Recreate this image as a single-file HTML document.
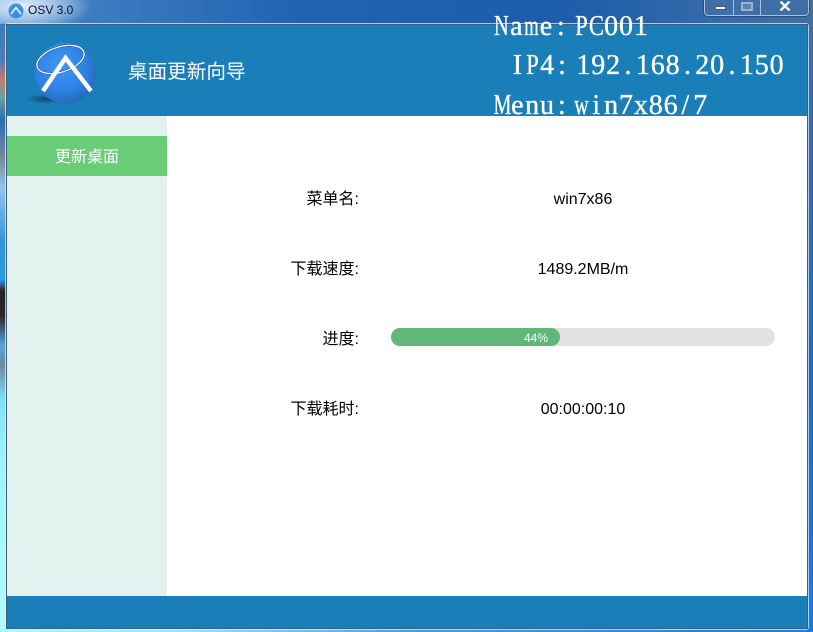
<!DOCTYPE html>
<html><head><meta charset="utf-8"><style>
html,body{margin:0;padding:0}
body{width:813px;height:632px;overflow:hidden;position:relative;font-family:"Liberation Sans","WenQuanYi Zen Hei","Noto Sans CJK SC",sans-serif;background:#1c6cc8}
div{position:absolute;box-sizing:border-box}
.lab{width:200px;left:159px;text-align:right;font-size:16px;line-height:20px;color:#000;white-space:nowrap}
.val{width:384px;left:391px;text-align:center;font-size:16px;line-height:20px;color:#000;white-space:nowrap}
.big{font-family:"Liberation Serif",serif;font-size:28px;line-height:32px;color:#fff;white-space:nowrap;z-index:3;-webkit-text-stroke:.35px #fff}
.big span{display:inline-flex;justify-content:center;width:14.86px}
.big span.n{transform:scaleX(.72)}
.big span.m{transform:scaleX(.66)}
.big span.p{transform:scaleX(.8)}
</style></head><body>
<div style="left:0;top:0;width:813px;height:24px;background:linear-gradient(90deg,#5b8fc9 0,#3f7cc0 90px,#1f63b2 300px,#1c5dac 560px,#3a6da8 760px,#42709f 813px)"></div>
<div style="left:0;top:0;width:90px;height:24px;background:radial-gradient(ellipse 70px 26px at 22px 6px,rgba(235,245,255,.95),rgba(200,225,250,.55) 60%,rgba(180,210,240,0) 100%)"></div>
<div style="left:0;top:24px;width:6px;height:608px;background:linear-gradient(180deg,#3d78bd 0,#4a7fb8 6%,#c47a70 9%,#6aa39a 12%,#2a6cb8 16%,#7a8a9a 22%,#8fc6ee 27%,#2f93dc 36%,#2a9be6 42%,#2a2024 44%,#30262a 48%,#56a5dc 53%,#6a8a9c 56%,#7fe2fb 62%,#9cf4ff 72%,#b2fbff 100%)"></div>
<div style="left:807px;top:24px;width:6px;height:608px;background:linear-gradient(180deg,#40709f 0,#2f6bb0 30%,#1c6cc8 60%,#1e7ae0 100%)"></div>
<div style="left:0;top:628px;width:813px;height:4px;background:linear-gradient(90deg,#aaf9ff 0,#8fe8fb 180px,#3f9cec 420px,#1e7ae0 813px)"></div>
<div style="left:5px;top:23px;width:804px;height:607px;border:1px solid rgba(235,245,255,.7);border-radius:3px"></div>
<div style="left:6px;top:24px;width:802px;height:605px;border:1px solid #3d5f7c;background:#fff"></div>

<div style="left:7px;top:25px;width:800px;height:91px;background:#1a7fb9"></div>
<svg style="position:absolute;left:20px;top:35px" width="90" height="75" viewBox="20 35 90 75">
<defs><radialGradient id="b" cx=".42" cy=".38" r=".68"><stop offset="0" stop-color="#3c98fa"/><stop offset=".6" stop-color="#2f82e4"/><stop offset="1" stop-color="#2266b4"/></radialGradient><radialGradient id="s"><stop offset="0" stop-color="#0c3a5c" stop-opacity=".85"/><stop offset="1" stop-color="#0c3a5c" stop-opacity="0"/></radialGradient></defs>
<ellipse cx="47" cy="99" rx="22" ry="5" fill="url(#s)"/>
<circle cx="65.5" cy="73" r="30.5" fill="url(#b)"/>
<ellipse cx="60.5" cy="59.5" rx="24.5" ry="12.5" transform="rotate(-18 60.5 59.5)" fill="none" stroke="#123a66" stroke-width="2.4" opacity=".55"/>
<ellipse cx="60.5" cy="59.5" rx="24.5" ry="12.5" transform="rotate(-18 60.5 59.5)" fill="none" stroke="#fff" stroke-width="1.2"/>
<path d="M43 91 L65.5 58 L91 91" fill="none" stroke="#fff" stroke-width="4.4"/>
</svg>
<div style="left:128px;top:60px;font-size:19.6px;line-height:24px;color:#fff;white-space:nowrap">桌面更新向导</div>

<div class="big" style="left:494px;top:11px"><span class="n">N</span><span>a</span><span class="m">m</span><span>e</span><span>:</span></div>
<div class="big" style="left:574px;top:11px"><span class="p">P</span><span class="p">C</span><span>0</span><span>0</span><span>1</span></div>
<div class="big" style="left:510px;top:50px"><span>I</span><span class="p">P</span><span>4</span><span>:</span></div>
<div class="big" style="left:576px;top:50px"><span>1</span><span>9</span><span>2</span><span>.</span><span>1</span><span>6</span><span>8</span><span>.</span><span>2</span><span>0</span><span>.</span><span>1</span><span>5</span><span>0</span></div>
<div style="left:7px;top:25px;width:800px;height:91px;overflow:hidden;z-index:3">
<div class="big" style="left:488px;top:65px"><span class="n">M</span><span>e</span><span>n</span><span>u</span><span>:</span></div>
<div class="big" style="left:567px;top:65px"><span class="n">w</span><span>i</span><span>n</span><span>7</span><span>x</span><span>8</span><span>6</span><span>/</span><span>7</span></div>
</div>

<div style="left:7px;top:116px;width:160px;height:480px;background:#e3f2ef"></div>
<div style="left:7px;top:136px;width:160px;height:40px;background:#69cc77;color:#fff;font-size:16px;line-height:43px;text-align:center">更新桌面</div>

<div class="lab" style="top:190px">菜单名:</div>
<div class="val" style="top:190px">win7x86</div>
<div class="lab" style="top:260px">下载速度:</div>
<div class="val" style="top:260px">1489.2MB/m</div>
<div class="lab" style="top:330px">进度:</div>
<div style="left:391px;top:328px;width:384px;height:18px;border-radius:9px;background:#e2e2e2"></div>
<div style="left:391px;top:328px;width:169px;height:18px;border-radius:9px;background:#5fb878;color:#fff;font-size:12px;line-height:21px;text-align:right;padding-right:12px">44%</div>
<div class="lab" style="top:400px">下载耗时:</div>
<div class="val" style="top:400px">00:00:00:10</div>

<div style="left:7px;top:596px;width:800px;height:32px;background:#1a7fb9"></div>

<svg style="position:absolute;left:8px;top:3px" width="16" height="16" viewBox="0 0 16 16"><circle cx="8" cy="8" r="7.5" fill="#3f8fe0"/><path d="M3 11 L8 4.5 L13 11" fill="none" stroke="#e8f4ff" stroke-width="1.6"/></svg>
<div style="left:28px;top:3px;font-size:12px;line-height:15px;color:#0a1420;white-space:nowrap">OSV 3.0</div>

<div style="left:704px;top:-4px;width:105px;height:20px;border:1px solid #a9c0d8;border-radius:4px;background:#3f6fa6;box-shadow:0 0 0 1px rgba(30,60,100,.6)"></div>
<div style="left:733px;top:0;width:1px;height:15px;background:#a9c0d8"></div>
<div style="left:760px;top:0;width:1px;height:15px;background:#a9c0d8"></div>
<div style="left:715px;top:6px;width:11px;height:4px;background:#eef2f6;border:1px solid #4a5a70"></div>
<div style="left:741px;top:2px;width:12px;height:9px;border:2px solid #9bb2cf;background:#5b84b4"></div>
<svg style="position:absolute;left:779px;top:1px" width="12" height="10" viewBox="0 0 12 10"><path d="M1.5 .5 L10.5 9.5 M10.5 .5 L1.5 9.5" stroke="#f2f4f7" stroke-width="2.4" fill="none"/></svg>
</body></html>
